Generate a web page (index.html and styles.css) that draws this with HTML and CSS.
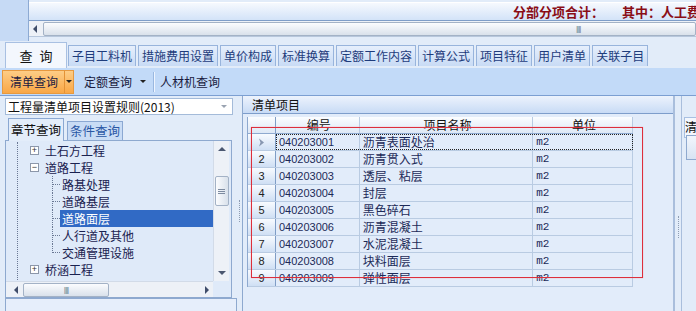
FILE: index.html
```html
<!DOCTYPE html>
<html lang="zh-CN">
<head>
    <meta charset="UTF-8">
    <title>清单查询</title>
    <link rel="stylesheet" href="styles.css">
</head>
<body>
    <!-- summary strip + horizontal scrollbar -->
    <div class="top">
        <div class="top-side"></div>
        <div class="top-main">
            <div class="summary"><span>分部分项合计：</span><span class="sum-b">其中：人工费</span></div>
            <div class="hscroll">
                <span class="arr arr-l"></span>
                <div class="hthumb wide"><span class="grip">||||</span></div>
            </div>
        </div>
    </div>

    <div class="tabs">
        <div class="tab active">查&nbsp;询</div>
        <div class="tab">子目工料机</div>
        <div class="tab">措施费用设置</div>
        <div class="tab">单价构成</div>
        <div class="tab">标准换算</div>
        <div class="tab">定额工作内容</div>
        <div class="tab">计算公式</div>
        <div class="tab">项目特征</div>
        <div class="tab">用户清单</div>
        <div class="tab">关联子目</div>
    </div>

    <div class="toolbar">
        <div class="btn-split">
            <span class="btn-main">清单查询</span>
            <span class="btn-drop"><span class="caret"></span></span>
        </div>
        <div class="tbtn">定额查询<span class="caret"></span></div>
        <span class="tsep"></span>
        <div class="tbtn last">人材机查询</div>
    </div>

    <div class="work">
        <!-- left: chapter tree -->
        <div class="left">
            <div class="combo">
                <span>工程量清单项目设置规则(2013)</span>
                <span class="combo-arr"></span>
            </div>
            <div class="subtabs">
                <div class="subtab on">章节查询</div>
                <div class="subtab">条件查询</div>
            </div>
            <div class="treebox">
                <div class="tree">
                    <div class="tree-inner">
                        <div class="node"><span class="exp">+</span>土石方工程</div>
                        <div class="node"><span class="exp">−</span>道路工程</div>
                        <div class="kids">
                            <div class="kid"><span class="lbl">路基处理</span></div>
                            <div class="kid"><span class="lbl">道路基层</span></div>
                            <div class="kid"><span class="lbl sel">道路面层</span></div>
                            <div class="kid"><span class="lbl">人行道及其他</span></div>
                            <div class="kid"><span class="lbl">交通管理设施</span></div>
                        </div>
                        <div class="node"><span class="exp">+</span>桥涵工程</div>
                    </div>
                </div>
                <div class="vscroll">
                    <span class="sbtn"><span class="arr arr-u"></span></span>
                    <span class="vthumb"><span class="vgrip"></span></span>
                    <span class="sbtn down"><span class="arr arr-d"></span></span>
                </div>
                <div class="hscroll small">
                    <span class="arr arr-l"></span>
                    <div class="hthumb"><span class="grip">||||</span></div>
                    <span class="arr arr-r"></span>
                </div>
                <div class="corner"></div>
            </div>
            <div class="left-foot"></div>
        </div>

        <div class="split"><span class="dots"></span></div>

        <!-- middle: bill items grid -->
        <div class="mid">
            <div class="mid-head">清单项目</div>
            <div class="mid-body">
                <div class="grid">
                    <div class="grow ghead">
                        <span class="rh"></span>
                        <span class="c1">编号</span>
                        <span class="c2">项目名称</span>
                        <span class="c3">单位</span>
                    </div>
                    <div class="grow">
                        <span class="rh"><svg width="7" height="9" viewBox="0 0 7 9"><path d="M1 0.5 L6 4.5 L1 8.5 L2.5 4.5 Z" fill="#8796b0"/></svg></span>
                        <span class="focus">
                            <span class="c1">040203001</span>
                            <span class="c2">沥青表面处治</span>
                            <span class="c3">m2</span>
                        </span>
                    </div>
                    <div class="grow"><span class="rh">2</span><span class="c1">040203002</span><span class="c2">沥青贯入式</span><span class="c3">m2</span></div>
                    <div class="grow"><span class="rh">3</span><span class="c1">040203003</span><span class="c2">透层、粘层</span><span class="c3">m2</span></div>
                    <div class="grow"><span class="rh">4</span><span class="c1">040203004</span><span class="c2">封层</span><span class="c3">m2</span></div>
                    <div class="grow"><span class="rh">5</span><span class="c1">040203005</span><span class="c2">黑色碎石</span><span class="c3">m2</span></div>
                    <div class="grow"><span class="rh">6</span><span class="c1">040203006</span><span class="c2">沥青混凝土</span><span class="c3">m2</span></div>
                    <div class="grow"><span class="rh">7</span><span class="c1">040203007</span><span class="c2">水泥混凝土</span><span class="c3">m2</span></div>
                    <div class="grow"><span class="rh">8</span><span class="c1">040203008</span><span class="c2">块料面层</span><span class="c3">m2</span></div>
                    <div class="grow"><span class="rh">9</span><span class="c1">040203009</span><span class="c2">弹性面层</span><span class="c3">m2</span></div>
                </div>
                <!-- red annotation box drawn over the grid -->
                <div class="mark"></div>
            </div>
        </div>

        <div class="split wide"><span class="dots"></span></div>

        <div class="right">
            <div class="rtab">清</div>
            <div class="rbox"></div>
        </div>
    </div>
</body>
</html>
```

FILE: styles.css
```css
* { box-sizing: border-box; }
body {
    margin: 0;
    width: 696px;
    height: 311px;
    overflow: hidden;
    background: #e2ecf9;
    font: 12px/17px "Noto Sans CJK SC", "Liberation Sans", sans-serif;
    color: #1c2a58;
}

/* top strip */
.top { display: flex; height: 41px; }
.top-side { width: 29px; background: #c6daf5; border-right: 1px solid #8daad3; }
.top-main { flex: 1; overflow: hidden; padding-top: 2px; }
.summary {
    height: 19px;
    padding-left: 484px;
    background: linear-gradient(#f6f9fe, #d3e3f8);
    border-top: 1px solid #fff;
    border-bottom: 1px solid #7e9dc8;
    white-space: nowrap;
    font-weight: bold;
    font-size: 13px;
    color: #8a0d16;
    line-height: 18px;
}
.sum-b { margin-left: 18px; }

.hscroll {
    display: flex;
    align-items: center;
    height: 16px;
    background: #edf1f7;
    border-bottom: 1px solid #b7c7dc;
}
.hthumb {
    display: flex;
    align-items: center;
    justify-content: center;
    height: 14px;
    width: 86px;
    border: 1px solid #a3b2c6;
    border-radius: 2px;
    background: linear-gradient(#fbfcfe, #d9e1eb);
}
.hthumb.wide { width: 1100px; justify-content: flex-start; padding-left: 532px; }
.grip { font: 8px/10px "Liberation Sans", sans-serif; color: #6b7b92; letter-spacing: -1px; }

.arr { display: inline-block; width: 0; height: 0; border: 4px solid transparent; }
.arr-l { border-left-width: 0; border-right-color: #3f4d6a; margin: 0 6px 0 4px; }
.arr-r { border-right-width: 0; border-left-color: #3f4d6a; margin: 0 4px 0 auto; }
.arr-u { border-top-width: 0; border-bottom-color: #4a5770; }
.arr-d { border-bottom-width: 0; border-top-color: #4a5770; }

/* main tabs */
.tabs {
    display: flex;
    align-items: flex-end;
    gap: 2px;
    height: 27px;
    padding-left: 5px;
}
.tab {
    height: 21px;
    margin-bottom: 2px;
    padding: 0 3px;
    border: 1px solid #98b4dc;
    border-bottom: 0;
    background: linear-gradient(#e6effc, #c8dbf5);
    color: #1e3c7c;
    line-height: 20px;
    white-space: nowrap;
}
.tab.active {
    width: 62px;
    height: 26px;
    margin: 0 -1px 0 0;
    padding-top: 3px;
    background: #f3f7fd;
    border-color: #a8c0e2;
    text-align: center;
    font-size: 13px;
    color: #111;
    word-spacing: 4px;
}

/* toolbar */
.toolbar {
    display: flex;
    align-items: center;
    height: 28px;
    padding-left: 2px;
    background: #c2daf8;
    border-bottom: 1px solid #7c9fd2;
}
.btn-split {
    display: flex;
    height: 24px;
    border: 1px solid #e6993f;
    background: linear-gradient(#fdcd86, #f9a746);
    color: #1a1a40;
}
.btn-main { padding: 0 6px 0 7px; line-height: 22px; border-right: 1px solid #e39236; }
.btn-drop { display: flex; align-items: center; justify-content: center; width: 8px; }
.caret {
    display: inline-block;
    width: 0;
    height: 0;
    border: 3px solid transparent;
    border-bottom-width: 0;
    border-top-color: #222;
    vertical-align: middle;
}
.tbtn { display: flex; align-items: center; padding: 0 7px 0 10px; line-height: 22px; color: #1a1a40; }
.tbtn .caret { margin-left: 8px; }
.tbtn.last { padding-left: 5px; }
.tsep { width: 2px; height: 20px; background: #9ab8e0; border-right: 1px solid #eef5ff; }

/* work area */
.work {
    display: grid;
    grid-template-columns: 237px 5px 432px 7px 1fr;
    height: 215px;
}

.left { padding: 2px 0 0 5px; }
.combo {
    display: flex;
    align-items: center;
    width: 228px;
    height: 17px;
    padding-left: 2px;
    background: #fff;
    border: 1px solid #a4bbd9;
    color: #111;
    line-height: 15px;
}
.combo-arr {
    margin: 0 5px 0 auto;
    border: 3px solid transparent;
    border-bottom-width: 0;
    border-top-color: #9aa3b1;
}
.subtabs { display: flex; align-items: flex-end; gap: 3px; height: 22px; margin-top: 3px; padding-left: 3px; }
.subtab {
    height: 19px;
    padding: 0 2px;
    border: 1px solid #8ba8d2;
    border-bottom: 0;
    background: #c9dcf5;
    color: #2a57a4;
    line-height: 18px;
    font-size: 12.5px;
}
.subtab.on {
    position: relative;
    z-index: 1;
    height: 23px;
    margin-bottom: -1px;
    background: #e3edfa;
    color: #111;
    line-height: 22px;
}
.treebox {
    display: grid;
    grid-template-columns: 207px 16px;
    grid-template-rows: 140px 16px;
    width: 227px;
    height: 158px;
    border: 1px solid #8ea9cf;
    background: #dfeaf9;
}
.tree { overflow: hidden; padding-top: 1px; color: #1a2250; }
.tree-inner { margin-left: 11px; border-left: 1px dotted #6a7894; min-height: 140px; }
.node { display: flex; align-items: center; height: 17px; padding-left: 12px; white-space: nowrap; }
.exp {
    display: inline-flex;
    align-items: center;
    justify-content: center;
    width: 9px;
    height: 9px;
    margin-right: 6px;
    border: 1px solid #8c97aa;
    background: #fff;
    font: 9px/1 "Liberation Sans", sans-serif;
    color: #333;
}
.kids { margin-left: 34px; }
.kid { position: relative; height: 17px; padding-left: 8px; white-space: nowrap; }
.kid::before {
    content: "";
    position: absolute;
    left: 0;
    top: 0;
    bottom: 0;
    border-left: 1px dotted #6a7894;
}
.kid:last-child::before { bottom: 8px; }
.kid::after {
    content: "";
    position: absolute;
    left: 1px;
    top: 8px;
    width: 7px;
    border-top: 1px dotted #6a7894;
}
.lbl { display: block; padding-left: 2px; }
.lbl.sel { background: #316ac5; color: #fff; }

.vscroll {
    display: flex;
    flex-direction: column;
    align-items: center;
    background: #edf1f7;
    border-left: 1px solid #d2dbe8;
}
.sbtn { display: flex; align-items: center; justify-content: center; width: 16px; height: 16px; }
.sbtn.down { margin-top: auto; }
.vthumb {
    display: flex;
    align-items: center;
    justify-content: center;
    width: 14px;
    height: 30px;
    margin-top: 19px;
    border: 1px solid #a3b2c6;
    border-radius: 2px;
    background: linear-gradient(90deg, #fbfcfe, #d9e1eb);
}
.vgrip { width: 7px; height: 5px; border-top: 1px solid #7d8ba0; border-bottom: 1px solid #7d8ba0; position: relative; }
.vgrip::after { content: ""; position: absolute; left: 0; right: 0; top: 1px; border-top: 1px solid #7d8ba0; }
.hscroll.small { border-bottom: 0; border-top: 1px solid #d2dbe8; }
.hscroll.small .arr-l { margin: 0 5px 0 8px; }
.corner { background: #dfeaf9; }
.left-foot { width: 232px; height: 14px; border: 1px solid #8ea9cf; border-bottom: 0; background: #e6eefb; }

/* splitters */
.split { display: flex; justify-content: center; padding-top: 104px; }
.split .dots { width: 1px; height: 22px; border-left: 1px dotted #8d9cb3; }
.split.wide { padding-top: 120px; border-left: 1px solid #a9bedc; }

/* middle panel */
.mid { display: flex; flex-direction: column; border-left: 1px solid #8ea9cf; border-right: 1px solid #a9bedc; }
.mid-head {
    height: 18px;
    padding-left: 9px;
    background: linear-gradient(#edf3fd, #c8dbf5);
    border-bottom: 1px solid #7d9dcb;
    color: #111;
    line-height: 18px;
}
.mid-body { position: relative; flex: 1; padding: 3px 0 0 4px; background: #e2ecfa; }
.grid { border-left: 1px solid #8ea9cf; width: 386px; }
.grow { display: flex; height: 17px; border-bottom: 1px solid #b9cbe2; }
.grow > span, .focus > span { white-space: nowrap; overflow: hidden; }
.rh {
    display: flex;
    align-items: center;
    justify-content: center;
    width: 28px;
    background: linear-gradient(#f8fbff, #cfdff4);
    border-right: 1px solid #7f9dc6;
    font: 11px/16px "Liberation Sans", sans-serif;
    color: #222;
}
.c1 { width: 84px; padding-left: 3px; border-right: 1px solid #b9cbe2; font: 11px/16px "Liberation Sans", sans-serif; }
.c2 { width: 174px; padding-left: 3px; border-right: 1px solid #b9cbe2; line-height: 16px; }
.c3 { width: 100px; padding-left: 3px; border-right: 1px solid #b9cbe2; font: 11px/16px "Liberation Mono", monospace; }
.focus { display: flex; outline: 1px dotted #222; outline-offset: -1px; }
.ghead { border-bottom-color: #8ea9cf; background: linear-gradient(#fbfdff, #dde8f6); }
.ghead > span { text-align: center; color: #111; font: 12px/16px "Noto Sans CJK SC", sans-serif; }
.ghead .rh { background: linear-gradient(#fbfdff, #dde8f6); }
.mark {
    position: absolute;
    left: 8px;
    top: 13px;
    width: 392px;
    height: 151px;
    border: 1px solid #dd2f3c;
    box-shadow: 0 0 1px #f19aa0;
}

/* right panel */
.right { padding-top: 21px; border-left: 1px solid #a9bedc; overflow: hidden; }
.rtab {
    width: 14px;
    height: 21px;
    margin-left: 2px;
    background: #f3f7fd;
    border: 1px solid #a8c0e2;
    border-right: 0;
    color: #111;
    white-space: nowrap;
}
.rbox { height: 25px; margin: -3px 0 0 4px; border: 1px solid #8ea9cf; border-right: 0; background: linear-gradient(#f2f6fc, #d7e3f3); }
```
